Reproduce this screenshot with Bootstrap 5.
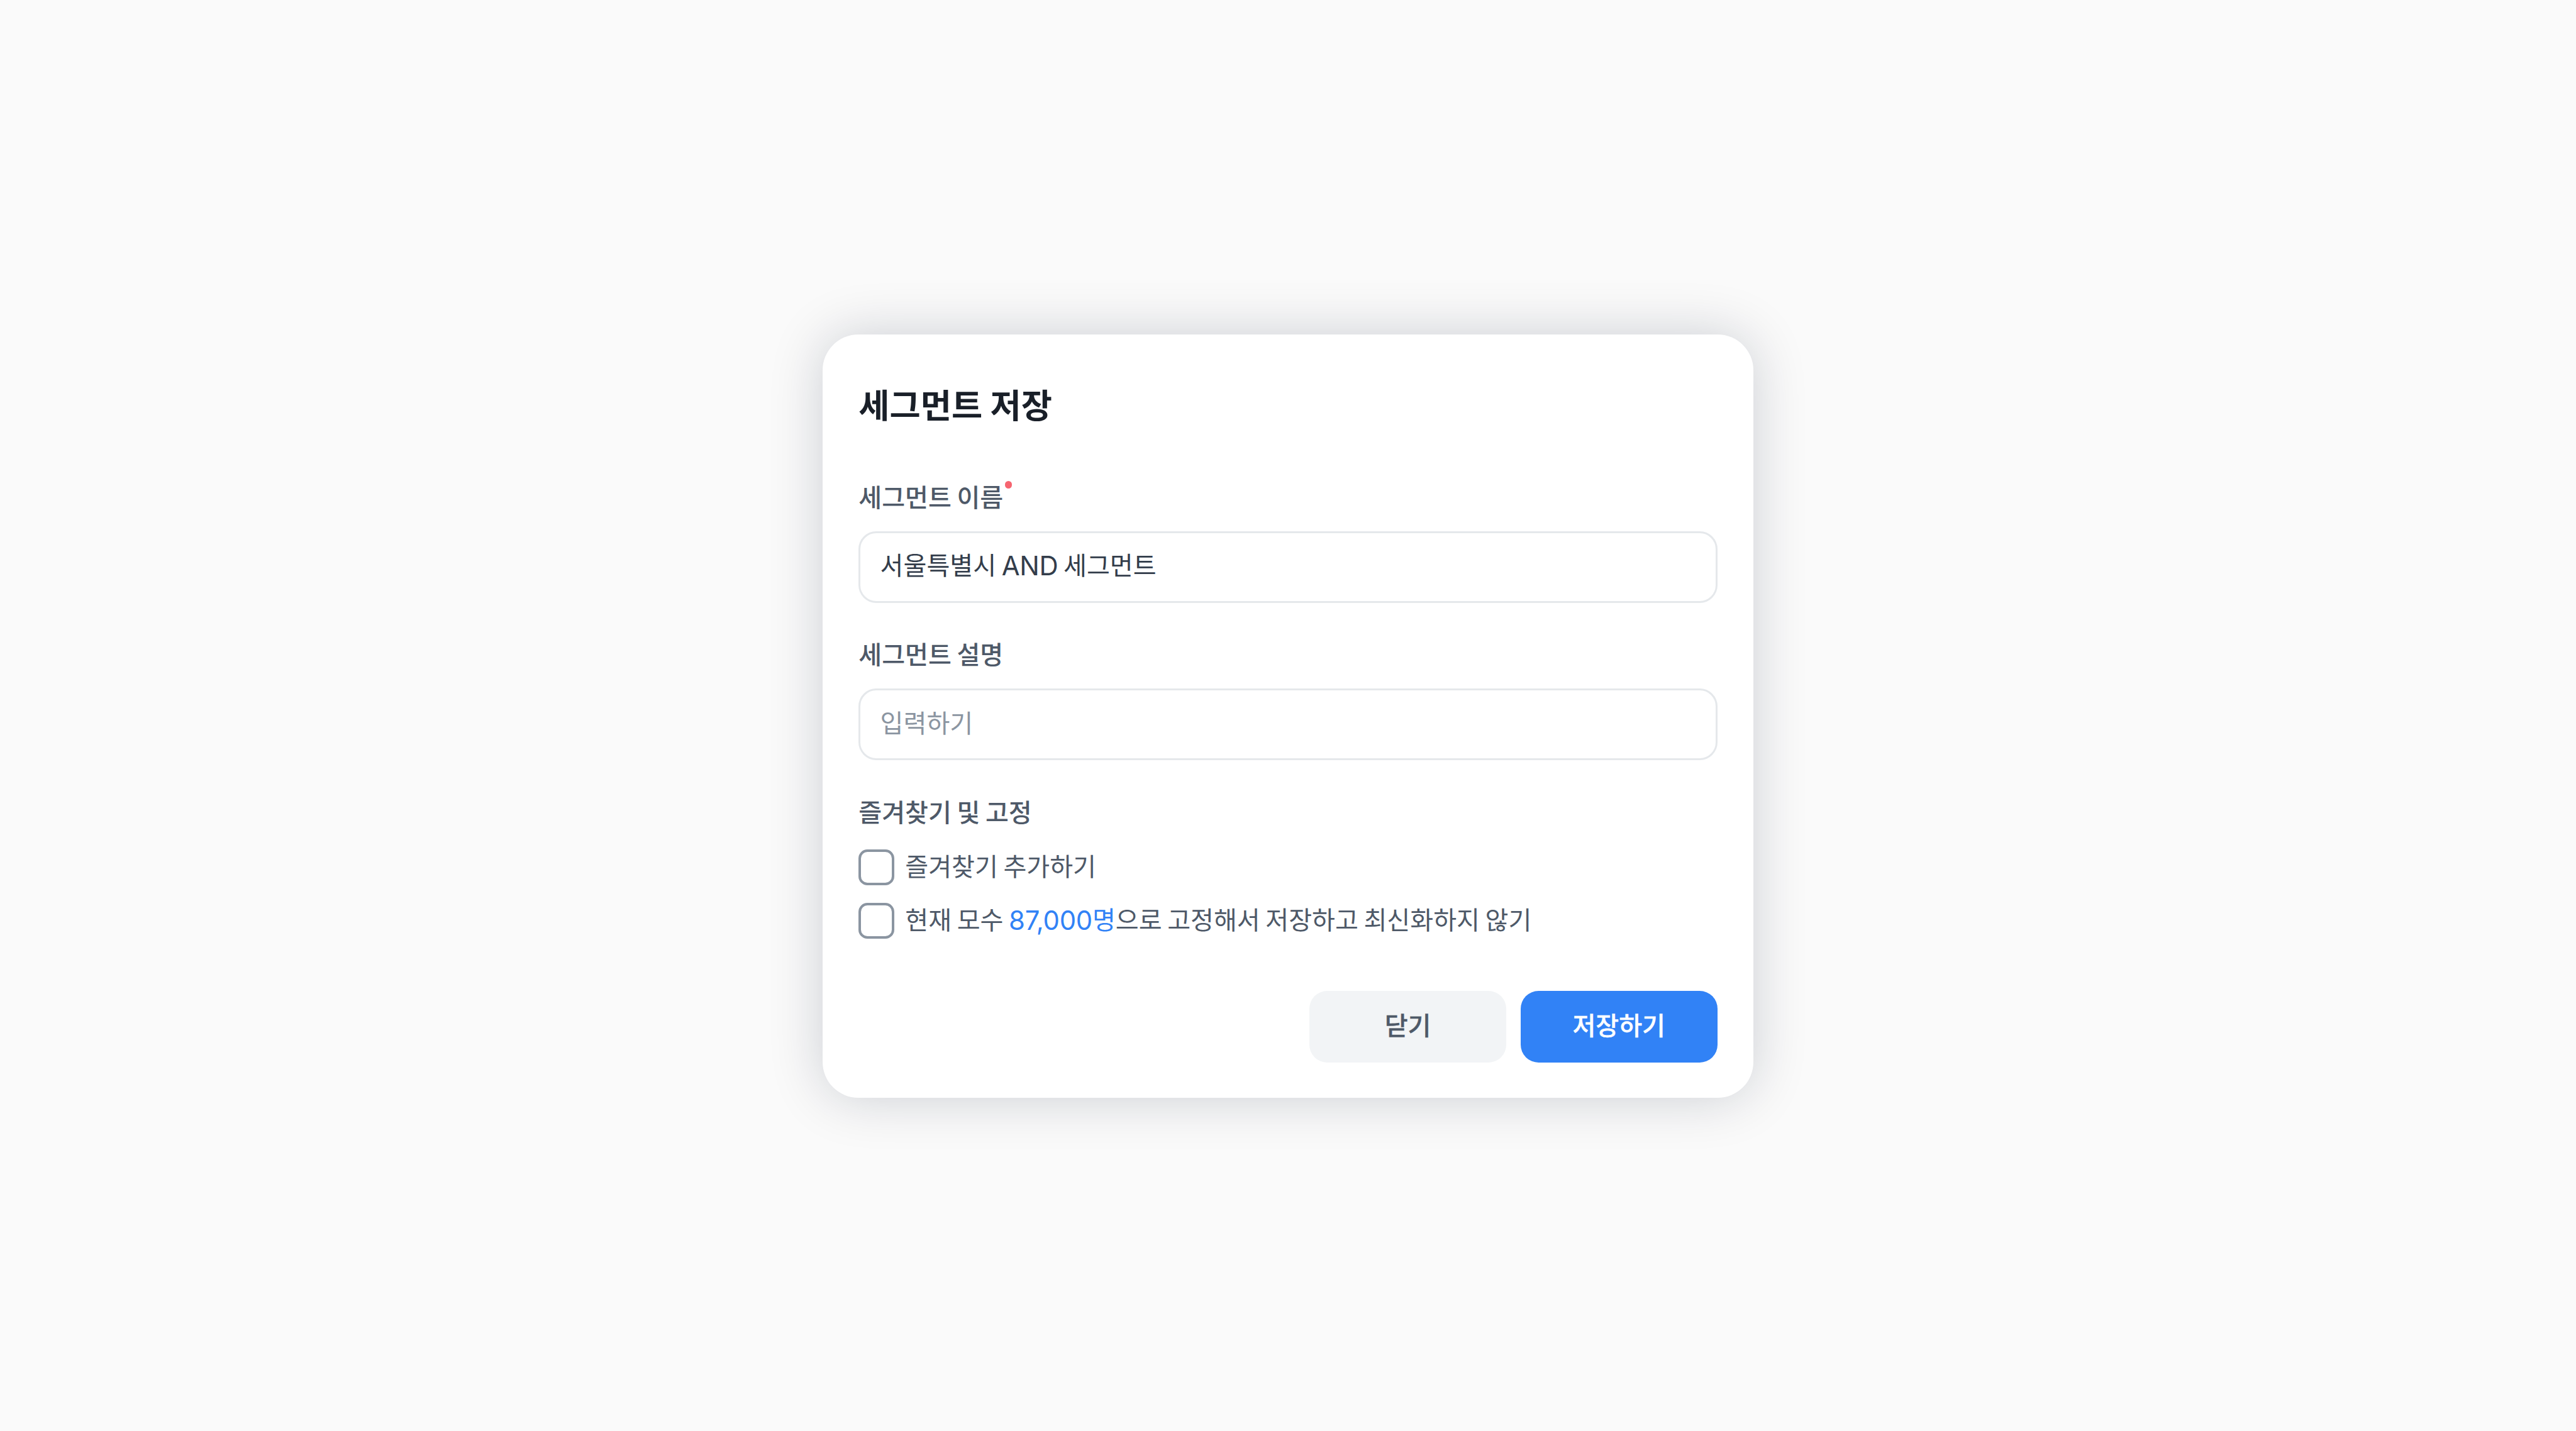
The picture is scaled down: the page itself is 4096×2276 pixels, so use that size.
<!DOCTYPE html>
<html lang="ko">
<head>
<meta charset="utf-8">
<meta name="viewport" content="width=device-width, initial-scale=1">
<title>세그먼트 저장</title>
<link rel="stylesheet" href="https://cdn.jsdelivr.net/npm/bootstrap@5.3.0/dist/css/bootstrap.min.css">
<style>
  /* --u = one design unit on a 1440-wide canvas */
  :root { font-size: 45.5111px; --u: 2.84444px; }
  body {
    background: #fafafa;
    font-family: "Noto Sans CJK KR", Inter, sans-serif;
    font-size: calc(14.1 * var(--u));
    line-height: calc(20 * var(--u));
    word-spacing: calc(-.92 * var(--u));
    color: #4e5968;
    overflow: hidden;
  }
  .stage { padding-top: calc(187 * var(--u)); }
  .dialog-card {
    width: calc(520 * var(--u));
    height: calc(427 * var(--u));
    padding: calc(25 * var(--u)) calc(20 * var(--u)) calc(20 * var(--u));
    border: 0;
    border-radius: calc(20 * var(--u));
    box-shadow: 0 0 calc(30 * var(--u)) rgba(2, 20, 50, .19);
  }
  .dialog-title {
    font-size: calc(18.8 * var(--u));
    line-height: calc(27.6 * var(--u));
    font-weight: 700;
    color: #191f28;
    margin-bottom: calc(29.4 * var(--u));
  }
  .field { margin-bottom: calc(20 * var(--u)); }
  .form-label { margin-bottom: calc(11.2 * var(--u)); font-weight: 500; line-height: calc(16.8 * var(--u)); }
  .checks-title { margin-bottom: calc(13.2 * var(--u)); }
  .need-dot { width: calc(4 * var(--u)); height: calc(4 * var(--u)); margin-left: calc(1 * var(--u)); background: #f66570; }
  .form-control {
    height: calc(40 * var(--u));
    padding: calc(7.4 * var(--u)) calc(11 * var(--u)) calc(10.6 * var(--u));
    border: 3px solid #e5e8eb;
    border-radius: calc(10 * var(--u));
    font-size: calc(14.1 * var(--u));
    line-height: calc(20 * var(--u));
    word-spacing: inherit;
    color: #333d4b;
  }
  .form-control::placeholder { color: #8b95a1; }
  .latin { font-family: Inter, sans-serif; font-size: calc(14.7 * var(--u)); line-height: 1; letter-spacing: -.006em; vertical-align: calc(-.4 * var(--u)); }
  .checks { gap: calc(10 * var(--u)); }
  .form-check { min-height: 0; padding: 0; margin: 0; gap: calc(6 * var(--u)); height: calc(20 * var(--u)); }
  .form-check .form-check-input {
    float: none; margin: 0; flex: none;
    width: calc(20 * var(--u)); height: calc(20 * var(--u));
    border: calc(1.5 * var(--u)) solid #8b95a1;
    border-radius: calc(5 * var(--u));
  }
  .form-check-label { padding-bottom: calc(2.4 * var(--u)); }
  .count { color: #3182f6; }
  .actions { gap: calc(8 * var(--u)); }
  .actions .btn {
    width: calc(110 * var(--u)); height: calc(40 * var(--u));
    padding: 0 0 calc(2.8 * var(--u)); border: 0; border-radius: calc(10 * var(--u));
    font-size: calc(14.1 * var(--u)); font-weight: 500; line-height: calc(37.2 * var(--u));
    -webkit-text-stroke: .4px currentColor;
  }
  .btn-close-dialog { background: #f2f4f6; color: #4e5968; }
  .btn-save { background: #3182f6; color: #fff; }
</style>
<script src="https://cdn.jsdelivr.net/npm/bootstrap@5.3.0/dist/js/bootstrap.bundle.min.js"></script>
</head>
<body>
<main class="stage d-flex justify-content-center align-items-start vh-100">
  <form class="card dialog-card d-flex flex-column">
    <h1 class="dialog-title">세그먼트 저장</h1>
    <div class="field">
      <div class="form-label d-flex align-items-start">세그먼트 이름<span class="need-dot rounded-circle"></span></div>
      <div class="form-control text-nowrap" role="textbox">서울특별시 <span class="latin">AND</span> 세그먼트</div>
    </div>
    <div class="field">
      <label class="form-label d-block" for="desc">세그먼트 설명</label>
      <input class="form-control" id="desc" type="text" placeholder="입력하기">
    </div>
    <div class="form-label checks-title">즐겨찾기 및 고정</div>
    <div class="checks d-flex flex-column">
      <div class="form-check d-flex align-items-center">
        <input class="form-check-input" type="checkbox" id="fav">
        <label class="form-check-label" for="fav">즐겨찾기 추가하기</label>
      </div>
      <div class="form-check d-flex align-items-center">
        <input class="form-check-input" type="checkbox" id="fix">
        <label class="form-check-label text-nowrap" for="fix">현재 모수 <span class="count"><span class="latin">87,000</span>명</span>으로 고정해서 저장하고 최신화하지 않기</label>
      </div>
    </div>
    <div class="actions d-flex justify-content-end mt-auto">
      <button type="button" class="btn btn-close-dialog">닫기</button>
      <button type="button" class="btn btn-save">저장하기</button>
    </div>
  </form>
</main>
</body>
</html>
